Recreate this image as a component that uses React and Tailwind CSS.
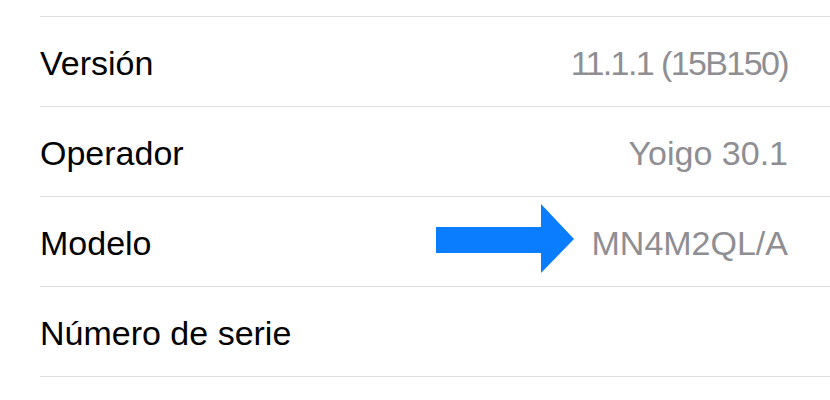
const rows = [
	{ label: "Versión", value: "11.1.1 (15B150)", tight: true },
	{ label: "Operador", value: "Yoigo 30.1" },
	{ label: "Modelo", value: "MN4M2QL/A" },
	{ label: "Número de serie", value: "" },
];

const App = () => {
	return (
		<div
			className="relative w-[830px] h-[400px] bg-white overflow-hidden"
			style={{ fontFamily: '"Liberation Sans", Arial, sans-serif' }}>
			<div className="h-[16px]" />
			<div className="pl-[40px]">
				{rows.map((row) => (
					<div
						key={row.label}
						className="flex items-center justify-between h-[90px] border-t border-[#dedee1] pt-[4px] pr-[42px]">
						<span className="text-[34px] text-black">{row.label}</span>
						<span
							className={
								row.tight
									? "text-[34px] text-[#8e8e93] tracking-[-1.6px]"
									: "text-[34px] text-[#8e8e93]"
							}>
							{row.value}
						</span>
					</div>
				))}
				<div className="border-t border-[#dedee1]" />
			</div>

			{/* arrow annotation */}
			<svg
				className="absolute left-[436px] top-[204px]"
				width="138"
				height="69"
				viewBox="0 0 138 69">
				<polygon
					points="0,23 105,23 105,0 138,35 105,69 105,49 0,49"
					fill="#0a7dff"
				/>
			</svg>
		</div>
	);
};

export default App;
